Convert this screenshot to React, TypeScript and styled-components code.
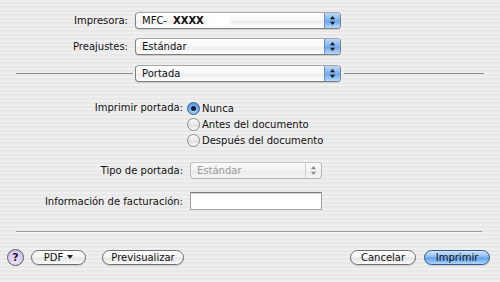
import styled, { createGlobalStyle, css } from "styled-components";

const GlobalStyle = createGlobalStyle`
  html, body {
    margin: 0;
    padding: 0;
    background: #ececec;
  }
  * { box-sizing: border-box; }
`;

// Aqua pinstripe sheet
const Sheet = styled.div`
  width: 500px;
  height: 282px;
  overflow: hidden;
  display: flex;
  flex-direction: column;
  padding-top: 12px;
  background: repeating-linear-gradient(
    to bottom,
    #efefef 0,
    #efefef 2px,
    #e8e8e8 2px,
    #e8e8e8 4px
  );
  font-family: "DejaVu Sans", Verdana, sans-serif;
  font-size: 10px;
  color: #111;
`;

const Row = styled.div<{ $mt?: number; $h?: number; $top?: boolean }>`
  display: flex;
  align-items: ${(p) => (p.$top ? "flex-start" : "center")};
  height: ${(p) => p.$h ?? 17}px;
  margin-top: ${(p) => p.$mt ?? 0}px;
`;

// the "Portada" row: rule, popup, rule
const PaneRow = styled(Row)`
  padding: 0 16px;
  gap: 2px;
`;

const Label = styled.div<{ $w: number; $gap: number; $lh?: number }>`
  width: ${(p) => p.$w}px;
  margin-right: ${(p) => p.$gap}px;
  text-align: right;
  white-space: nowrap;
  flex-shrink: 0;
  line-height: ${(p) => (p.$lh ? `${p.$lh}px` : "normal")};
`;

const Rule = styled.div<{ $w?: number }>`
  height: 1px;
  background: #8e8e8e;
  ${(p) =>
    p.$w
      ? css`
          width: ${p.$w}px;
        `
      : css`
          flex: 1;
          margin-left: 1px;
        `}
`;

const Popup = styled.div<{ $w: number; $disabled?: boolean }>`
  width: ${(p) => p.$w}px;
  height: 17px;
  flex-shrink: 0;
  display: flex;
  align-items: center;
  border-radius: 4px;
  border: 1px solid ${(p) => (p.$disabled ? "#b9b9b9" : "#7f7f7f")};
  border-top-color: ${(p) => (p.$disabled ? "#c4c4c4" : "#a5a5a5")};
  background: ${(p) =>
    p.$disabled
      ? "linear-gradient(#fbfbfb, #f1f1f1 50%, #e9e9e9 51%, #f6f6f6)"
      : "linear-gradient(#ffffff, #f7f7f7 50%, #ececec 55%, #ffffff)"};
  box-shadow: ${(p) => (p.$disabled ? "none" : "0 1px 0 rgba(0,0,0,0.12)")};
  color: ${(p) => (p.$disabled ? "#9a9a9a" : "#111")};
  padding-left: 6px;
  overflow: hidden;
`;

const PopupText = styled.span`
  flex: 1;
  white-space: nowrap;
`;

const Stepper = styled.div<{ $disabled?: boolean }>`
  width: 16px;
  height: 100%;
  display: flex;
  align-items: center;
  justify-content: center;
  border-left: 1px solid ${(p) => (p.$disabled ? "#d0d0d0" : "#6a8fbf")};
  background: ${(p) =>
    p.$disabled
      ? "transparent"
      : "linear-gradient(#bcd8f7, #80b3ee 48%, #6aa4e9 52%, #b6dafc)"};
`;

const Arrows = ({ color }: { color: string }) => (
  <svg width="7" height="11" viewBox="0 0 7 11">
    <path d="M3.5 1 L6 4.2 L1 4.2 Z" fill={color} />
    <path d="M3.5 10 L6 6.8 L1 6.8 Z" fill={color} />
  </svg>
);

const Bold = styled.b`
  font-weight: bold;
  margin-left: 6px;
`;

const Smudge = styled.span`
  display: inline-block;
  width: 22px;
  height: 9px;
  margin-left: 4px;
  vertical-align: middle;
  background: #ffffff;
  filter: blur(1px);
`;

const RadioList = styled.div`
  display: flex;
  flex-direction: column;
`;

const RadioRow = styled.div`
  display: flex;
  align-items: center;
  height: 16px;
  gap: 2px;
  white-space: nowrap;
`;

const Radio = styled.span<{ $on?: boolean }>`
  width: 13px;
  height: 13px;
  border-radius: 50%;
  flex-shrink: 0;
  display: flex;
  align-items: center;
  justify-content: center;
  border: 1px solid ${(p) => (p.$on ? "#3d5f8e" : "#8a8a8a")};
  background: ${(p) =>
    p.$on
      ? "radial-gradient(circle at 50% 70%, #b7dafc, #5e9be6 70%, #4a86d6)"
      : "linear-gradient(#fdfdfd, #e6e6e6 50%, #dcdcdc 55%, #ffffff)"};
  &::after {
    content: "";
    display: ${(p) => (p.$on ? "block" : "none")};
    width: 5px;
    height: 5px;
    border-radius: 50%;
    background: #14213a;
  }
`;

const Field = styled.div`
  width: 132px;
  height: 18px;
  background: #fff;
  border: 1px solid #a4a4a4;
  border-top-color: #7a7a7a;
  box-shadow: inset 0 1px 1px rgba(0, 0, 0, 0.18);
`;

const Separator = styled.div`
  margin: 21px 18px 0 16px;
  height: 1px;
  background: #9c9c9c;
  box-shadow: 0 1px 0 #f8f8f8;
`;

const ButtonBar = styled.div`
  display: flex;
  align-items: center;
  margin-top: 17px;
  height: 16px;
  padding: 0 10px 0 7px;
`;

const Help = styled.div`
  width: 17px;
  height: 17px;
  border-radius: 50%;
  border: 1px solid #5c5c5c;
  background: radial-gradient(circle at 50% 70%, #efe6ff, #d4c4f0 70%, #bfaee0);
  display: flex;
  align-items: center;
  justify-content: center;
  font-weight: bold;
  font-size: 11px;
  color: #222;
  margin-right: 7px;
`;

const Button = styled.div<{ $w: number; $default?: boolean; $mr?: number }>`
  width: ${(p) => p.$w}px;
  height: 15px;
  margin-right: ${(p) => p.$mr ?? 0}px;
  border-radius: 8px;
  display: flex;
  align-items: center;
  justify-content: center;
  gap: 4px;
  font-size: 10px;
  white-space: nowrap;
  color: #111;
  border: 1px solid ${(p) => (p.$default ? "#35588a" : "#6e6e6e")};
  background: ${(p) =>
    p.$default
      ? "linear-gradient(#cfe4fc, #86b8f1 48%, #5f9ce8 52%, #aed6fc)"
      : "linear-gradient(#ffffff, #f4f4f4 48%, #e3e3e3 52%, #fbfbfb)"};
  box-shadow: 0 1px 1px rgba(0, 0, 0, 0.15);
`;

const Spacer = styled.div`
  flex: 1;
`;

const Caret = () => (
  <svg width="6" height="4" viewBox="0 0 6 4">
    <path d="M0 0 L6 0 L3 4 Z" fill="#222" />
  </svg>
);

export default function App() {
  return (
    <>
      <GlobalStyle />
      <Sheet>
        <Row>
          <Label $w={128} $gap={7}>
            Impresora:
          </Label>
          <Popup $w={206}>
            <PopupText>
              MFC-
              <Bold>XXXX</Bold>
              <Smudge />
            </PopupText>
            <Stepper>
              <Arrows color="#111" />
            </Stepper>
          </Popup>
        </Row>
        <Row $mt={9}>
          <Label $w={128} $gap={7}>
            Preajustes:
          </Label>
          <Popup $w={206}>
            <PopupText>Estándar</PopupText>
            <Stepper>
              <Arrows color="#111" />
            </Stepper>
          </Popup>
        </Row>
        <PaneRow $mt={10}>
          <Rule $w={117} />
          <Popup $w={206}>
            <PopupText>Portada</PopupText>
            <Stepper>
              <Arrows color="#111" />
            </Stepper>
          </Popup>
          <Rule />
        </PaneRow>

        <Row $mt={18} $h={48} $top>
          <Label $w={183} $gap={4} $lh={16}>
            Imprimir portada:
          </Label>
          <RadioList>
            <RadioRow>
              <Radio $on />
              Nunca
            </RadioRow>
            <RadioRow>
              <Radio />
              Antes del documento
            </RadioRow>
            <RadioRow>
              <Radio />
              Después del documento
            </RadioRow>
          </RadioList>
        </Row>

        <Row $mt={14}>
          <Label $w={183} $gap={7}>
            Tipo de portada:
          </Label>
          <Popup $w={132} $disabled>
            <PopupText>Estándar</PopupText>
            <Stepper $disabled>
              <Arrows color="#8a8a8a" />
            </Stepper>
          </Popup>
        </Row>

        <Row $mt={13} $h={18}>
          <Label $w={183} $gap={7}>
            Información de facturación:
          </Label>
          <Field />
        </Row>

        <Separator />

        <ButtonBar>
          <Help>?</Help>
          <Button $w={55} $mr={16}>
            PDF
            <Caret />
          </Button>
          <Button $w={82}>Previsualizar</Button>
          <Spacer />
          <Button $w={66} $mr={8}>
            Cancelar
          </Button>
          <Button $w={66} $default>
            Imprimir
          </Button>
        </ButtonBar>
      </Sheet>
    </>
  );
}
